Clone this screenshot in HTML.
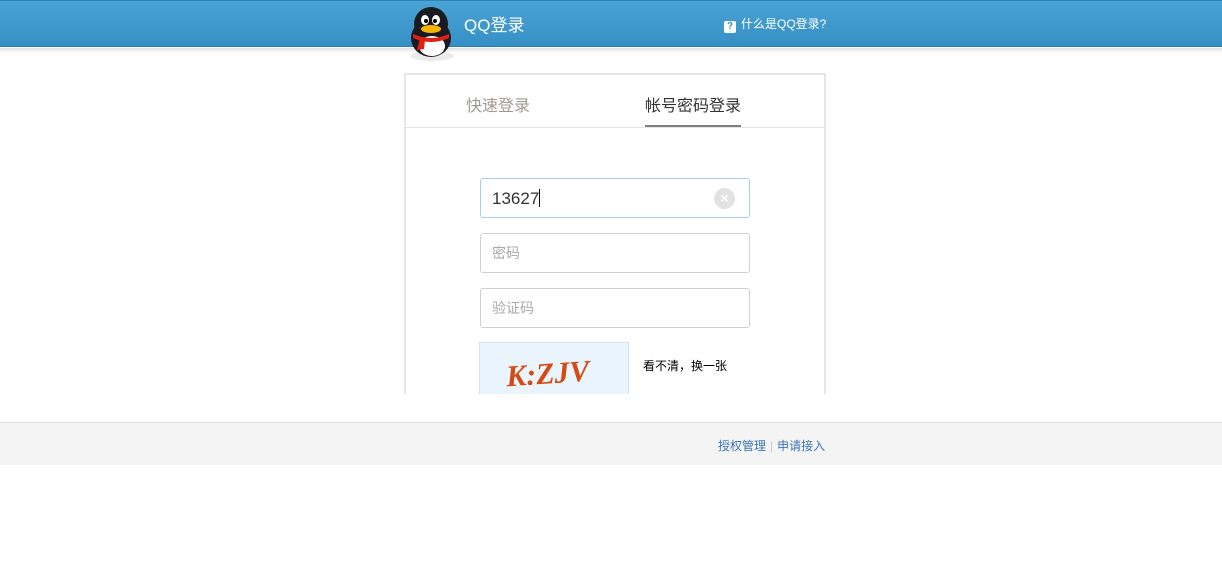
<!DOCTYPE html>
<html><head><meta charset="utf-8"><style>
*{margin:0;padding:0;box-sizing:border-box}
body{width:1222px;height:571px;background:#fff;font-family:"Liberation Sans","Noto Sans CJK SC",sans-serif;position:relative;overflow:hidden}
.hdr{position:absolute;left:0;top:0;width:1222px;height:47px;background:linear-gradient(#4aa3d4,#3590c6);border-top:1px solid #2c82bb;border-bottom:1px solid #2a7fb8}
.hdr:after{content:"";position:absolute;left:0;right:0;top:47px;height:5px;background:linear-gradient(rgba(0,0,0,.12),rgba(0,0,0,0))}
.title{position:absolute;left:464px;top:11px;color:#fff;font-size:17px}
.help{position:absolute;left:724px;top:15px;color:#fff;font-size:12px}
.help i{display:inline-block;width:12px;height:12px;background:#fff;color:#3590c6;font-style:normal;font-weight:bold;font-size:10px;text-align:center;line-height:12px;border-radius:2px;margin-right:5px;vertical-align:-1px}
.box{position:absolute;left:404px;top:73px;width:422px;height:321px;border:2px solid #e6e6e6;border-bottom:none;background:#fff}
.tabs{height:53px;border-bottom:1px solid #e4e4e4;position:relative}
.t1{position:absolute;left:60px;top:17px;font-size:16px;color:#a09a94}
.t2{position:absolute;left:239px;top:17px;font-size:16px;color:#333;border-bottom:2px solid #7f7f7f;height:35px}
.inp{position:absolute;left:480px;width:270px;height:40px;border:1px solid #d0d0d0;border-radius:3px;font-size:14px;color:#aaa;padding-left:11px;line-height:38px}
.cap{position:absolute;left:479px;top:342px;width:150px;height:52px;background:#eaf4fc;border:1px solid #cfe5f6;border-bottom:none}
.foot{position:absolute;left:0;top:422px;width:1222px;height:43px;background:#f4f4f4;border-top:1px solid #dedede}
.fl{position:absolute;left:718px;top:14px;font-size:12px;color:#3d74b8}
</style></head><body>
<div class="hdr"></div>
<svg style="position:absolute;left:404px;top:4px" width="56" height="58" viewBox="0 0 56 58">
<ellipse cx="28" cy="52" rx="22" ry="5" fill="rgba(0,0,0,.08)"/>
<ellipse cx="27" cy="34" rx="20" ry="19" fill="#1a1a22"/>
<ellipse cx="27" cy="20" rx="17" ry="17" fill="#1a1a22"/>
<ellipse cx="28" cy="42" rx="13" ry="10" fill="#fff"/>
<ellipse cx="21" cy="16" rx="4" ry="5" fill="#fff"/><ellipse cx="32" cy="16" rx="4" ry="5" fill="#fff"/>
<circle cx="22" cy="17" r="2" fill="#000"/><circle cx="31" cy="17" r="2" fill="#000"/>
<ellipse cx="27" cy="25" rx="10" ry="4" fill="#f5b400"/>
<path d="M9 30 Q27 38 45 30 L45 34 Q27 42 9 34Z" fill="#e02010"/>
<path d="M16 34 L13 46 L20 45 L21 36Z" fill="#e02010"/>
</svg>
<div class="title">QQ登录</div>
<div class="help"><i>?</i>什么是QQ登录?</div>
<div class="box"><div class="tabs"><div class="t1">快速登录</div><div class="t2">帐号密码登录</div></div></div>
<div class="inp" style="top:178px;border-color:#a6ccf0;color:#333;font-size:17px;line-height:40px">13627<span style="display:inline-block;width:1px;height:18px;background:#000;vertical-align:-3px"></span>
<span style="position:absolute;right:14px;top:9px;width:21px;height:21px;border-radius:50%;background:#e2e2e2;color:#fff;font-size:14px;line-height:21px;text-align:center;font-weight:bold">×</span></div>
<div class="inp" style="top:233px">密码</div>
<div class="inp" style="top:288px">验证码</div>
<div class="cap"><svg width="150" height="52"><text x="26" y="40" font-size="30" font-style="italic" font-weight="bold" fill="#d24a14" font-family="Liberation Serif,serif" transform="rotate(-4 75 30)">K:ZJV</text></svg></div>
<div style="position:absolute;left:643px;top:357px;font-size:12px;color:#000">看不清，换一张</div>
<div class="foot"><div class="fl">授权管理<span style="color:#ccc;margin:0 4px">|</span>申请接入</div></div>
</body></html>
